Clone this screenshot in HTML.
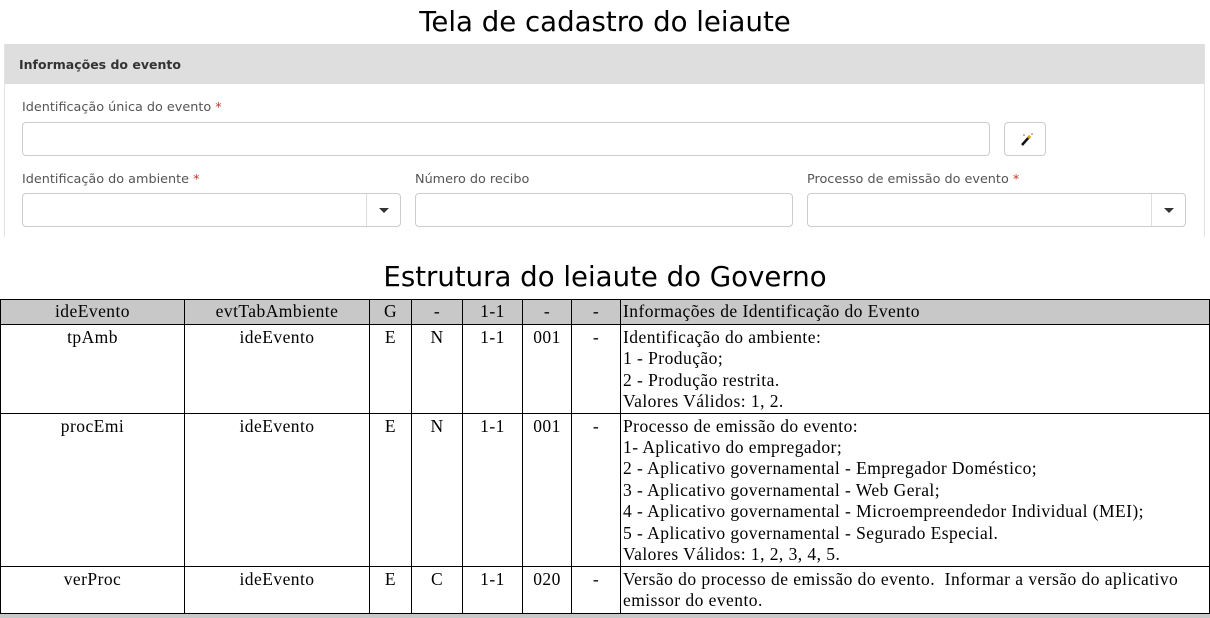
<!DOCTYPE html>
<html><head><meta charset="utf-8"><style>
*{margin:0;padding:0;box-sizing:border-box}
body{width:1210px;height:618px;background:#fff;position:relative;overflow:hidden;font-family:"Liberation Sans",sans-serif}
.t{position:absolute;left:0;width:1210px;text-align:center;font-size:27.6px;color:#000;font-family:"DejaVu Sans",sans-serif}
.panel{position:absolute;left:4px;top:44px;width:1201px;height:193px;border:1px solid #e3e3e3;border-bottom:none;border-top:none}
.ph{position:absolute;left:0;top:0;width:100%;height:40px;background:#dedede;font-size:12.5px;font-weight:bold;color:#333;padding:13px 0 0 14px;font-family:"DejaVu Sans",sans-serif}
.lbl{position:absolute;font-size:12.8px;color:#555;font-family:"DejaVu Sans",sans-serif}
.lbl b{color:#c0392b;font-weight:normal}
.in{position:absolute;height:34px;border:1px solid #ccc;border-radius:4px;background:#fff}
.dd{position:absolute;right:0;top:0;width:34px;height:32px;border-left:1px solid #ddd}
.dd:after{content:"";position:absolute;left:12px;top:14px;border-left:5px solid transparent;border-right:5px solid transparent;border-top:5px solid #333}
table{position:absolute;left:0;top:299px;width:1210px;border-collapse:collapse;font-family:"Liberation Serif",serif;font-size:17.5px;letter-spacing:.45px;color:#000}
td{border:1px solid #000;vertical-align:top;text-align:center;line-height:21.4px;padding:2px 2px 0}
td.d{text-align:left;padding-left:2px}
tr.h td{background:#c8c8c8;height:25px;padding-top:1px}
.bot{position:absolute;left:0;top:614px;width:1210px;height:4px;background:#c8c8c8}
</style></head><body>
<div class="t" style="top:5px">Tela de cadastro do leiaute</div>
<div class="panel">
<div class="ph">Informações do evento</div>
</div>
<div class="lbl" style="left:22px;top:100px">Identificação única do evento <b>*</b></div>
<div class="in" style="left:22px;top:122px;width:968px"></div>
<div class="in" style="left:1004px;top:122px;width:42px">
<svg width="42" height="34" style="position:absolute;left:0;top:0"><line x1="17" y1="22" x2="25" y2="13" stroke="#111" stroke-width="2.5"/><line x1="23" y1="15" x2="25" y2="13" stroke="#e8a200" stroke-width="2.5"/><circle cx="19" cy="12" r=".8" fill="#666"/><circle cx="27" cy="11" r=".8" fill="#666"/></svg></div>
<div class="lbl" style="left:22px;top:172px">Identificação do ambiente <b>*</b></div>
<div class="lbl" style="left:415px;top:172px">Número do recibo</div>
<div class="lbl" style="left:807px;top:172px">Processo de emissão do evento <b>*</b></div>
<div class="in" style="left:22px;top:193px;width:379px"><div class="dd"></div></div>
<div class="in" style="left:415px;top:193px;width:378px"></div>
<div class="in" style="left:807px;top:193px;width:379px"><div class="dd"></div></div>
<div class="t" style="top:260px">Estrutura do leiaute do Governo</div>
<table>
<colgroup><col style="width:184px"><col style="width:185px"><col style="width:42px"><col style="width:51px"><col style="width:60px"><col style="width:49px"><col style="width:49px"><col></colgroup>
<tr class="h"><td>ideEvento</td><td>evtTabAmbiente</td><td>G</td><td>-</td><td>1-1</td><td>-</td><td>-</td><td class="d">Informações de Identificação do Evento</td></tr>
<tr style="height:88px"><td>tpAmb</td><td>ideEvento</td><td>E</td><td>N</td><td>1-1</td><td>001</td><td>-</td><td class="d">Identificação do ambiente:<br>1 - Produção;<br>2 - Produção restrita.<br>Valores Válidos: 1, 2.</td></tr>
<tr style="height:153px"><td>procEmi</td><td>ideEvento</td><td>E</td><td>N</td><td>1-1</td><td>001</td><td>-</td><td class="d">Processo de emissão do evento:<br>1- Aplicativo do empregador;<br>2 - Aplicativo governamental - Empregador Doméstico;<br>3 - Aplicativo governamental - Web Geral;<br>4 - Aplicativo governamental - Microempreendedor Individual (MEI);<br>5 - Aplicativo governamental - Segurado Especial.<br>Valores Válidos: 1, 2, 3, 4, 5.</td></tr>
<tr style="height:47px"><td>verProc</td><td>ideEvento</td><td>E</td><td>C</td><td>1-1</td><td>020</td><td>-</td><td class="d">Versão do processo de emissão do evento.&nbsp; Informar a versão do aplicativo<br>emissor do evento.</td></tr>
</table>
<div class="bot"></div>
</body></html>
